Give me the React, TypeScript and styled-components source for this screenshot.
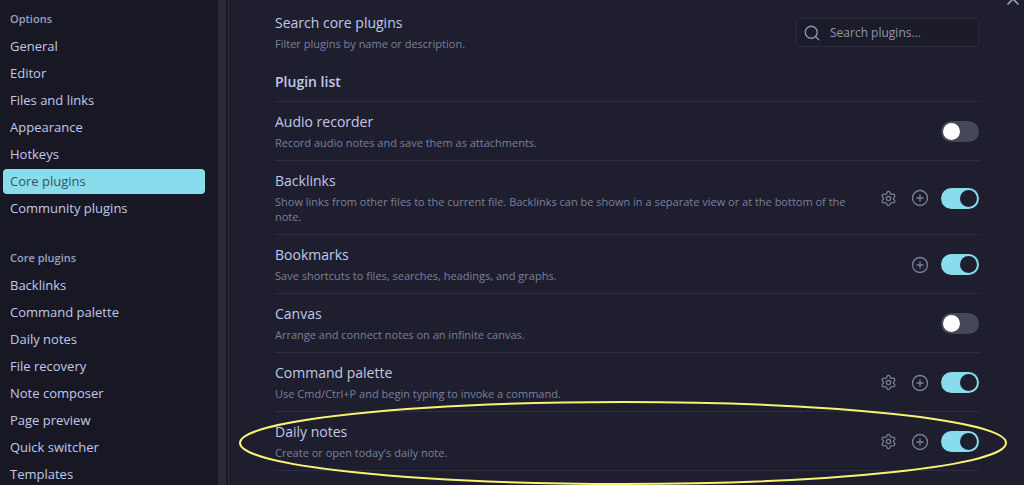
import React, { useState } from "react";
import styled, { createGlobalStyle, css } from "styled-components";
import { CirclePlus, Search, Settings, X } from "lucide-react";

const GlobalStyle = createGlobalStyle`
  * { box-sizing: border-box; }
  body {
    margin: 0;
    background: #1e1e2e;
    color: #c0c9ea;
    font-family: "Segoe UI", "Open Sans", "Noto Sans", sans-serif;
    font-size: 13px;
  }
  button, input { font: inherit; color: inherit; }
`;

const Modal = styled.div`
  position: relative;
  display: flex;
  height: 100vh;
  overflow: hidden;
`;

const Sidebar = styled.nav`
  flex: none;
  width: 218px;
  padding: 10px 13px 0 3px;
  background: #181825;
`;

const ScrollTrack = styled.div`
  flex: none;
  width: 11px;
  background: #181825;
  border-left: 8px solid #2b2a3a;
  border-right: 1px solid #313244;
`;

const NavGroup = styled.section`
  margin-bottom: 28px;
`;

const NavHeading = styled.h2`
  margin: 0 0 6px;
  padding: 0 7px;
  font-size: 11px;
  line-height: 18px;
  font-weight: 600;
  color: #9aa2c0;
`;

const NavList = styled.ul`
  display: flex;
  flex-direction: column;
  gap: 2px;
  margin: 0;
  padding: 0;
  list-style: none;
`;

const NavItem = styled.button<{ $active?: boolean }>`
  display: block;
  width: 100%;
  height: 25px;
  padding: 0 7px;
  border: 0;
  border-radius: 4px;
  background: transparent;
  text-align: left;
  line-height: 25px;
  ${(p) => p.$active && css`
    background: #89dceb;
    color: #3b5266;
  `}
`;

const Content = styled.main`
  flex: 1;
  min-width: 0;
  padding: 14px 45px 0 46px;
`;

const Row = styled.div<{ $divided?: boolean }>`
  position: relative;
  display: flex;
  align-items: center;
  justify-content: space-between;
  gap: 16px;
  ${(p) => p.$divided && css`
    padding: 11px 0 10px;
    border-top: 1px solid #2d2d3e;
  `}
`;

const RowText = styled.div`
  flex: 0 1 584px;
`;

const Name = styled.div`
  font-size: 14px;
  line-height: 18px;
`;

const Description = styled.div`
  margin-top: 4px;
  font-size: 11px;
  line-height: 15px;
  color: #7a809c;
`;

const ListHeading = styled.h3`
  margin: 22px 0 10px;
  font-size: 14px;
  line-height: 18px;
  font-weight: 600;
`;

const SearchBox = styled.label`
  display: flex;
  align-items: center;
  gap: 9px;
  width: 183px;
  height: 29px;
  padding: 0 6px;
  border: 1px solid #2b2b3c;
  border-radius: 4px;
  background: #1b1b29;
  color: #8f96b4;
`;

const SearchInput = styled.input`
  min-width: 0;
  flex: 1;
  padding: 0;
  border: 0;
  outline: 0;
  background: transparent;
  font-size: 12px;
  &::placeholder { color: #8f96b4; opacity: 1; }
`;

const Controls = styled.div`
  display: flex;
  align-items: center;
  gap: 10px;
`;

const IconButton = styled.button`
  display: flex;
  justify-content: center;
  width: 22px;
  padding: 2px 0;
  border: 0;
  background: transparent;
  color: #7a809c;
`;

const Toggle = styled.input`
  appearance: none;
  display: flex;
  width: 38px;
  height: 21px;
  margin: 0;
  padding: 2px;
  border-radius: 11px;
  background: #45475a;
  &::before {
    content: "";
    width: 17px;
    height: 17px;
    border-radius: 50%;
    background: #ffffff;
  }
  &:checked { background: #89dceb; justify-content: flex-end; }
  &:checked::before { background: #1e1e2e; }
`;

const CloseButton = styled.button`
  position: absolute;
  top: -11px;
  right: 1px;
  display: flex;
  padding: 0;
  border: 0;
  background: transparent;
  color: #9aa2c0;
`;

const Highlight = styled.svg`
  position: absolute;
  z-index: 1;
  top: -11px;
  left: -36px;
  width: calc(100% + 64px);
  height: 84px;
  overflow: visible;
  pointer-events: none;
`;

const optionPages = ["General", "Editor", "Files and links", "Appearance", "Hotkeys", "Core plugins", "Community plugins"];
const pluginPages = ["Backlinks", "Command palette", "Daily notes", "File recovery", "Note composer", "Page preview", "Quick switcher", "Templates"];

interface Plugin {
  name: string;
  description: string;
  enabled?: boolean;
  settings?: boolean;
  highlighted?: boolean;
}

const plugins: Plugin[] = [
  { name: "Audio recorder", description: "Record audio notes and save them as attachments." },
  { name: "Backlinks", description: "Show links from other files to the current file. Backlinks can be shown in a separate view or at the bottom of the note.", enabled: true, settings: true },
  { name: "Bookmarks", description: "Save shortcuts to files, searches, headings, and graphs.", enabled: true },
  { name: "Canvas", description: "Arrange and connect notes on an infinite canvas." },
  { name: "Command palette", description: "Use Cmd/Ctrl+P and begin typing to invoke a command.", enabled: true, settings: true },
  { name: "Daily notes", description: "Create or open today's daily note.", enabled: true, settings: true, highlighted: true },
];

function NavSection({ title, pages, active }: { title: string; pages: string[]; active?: string }) {
  return (
    <NavGroup>
      <NavHeading>{title}</NavHeading>
      <NavList>
        {pages.map((page) => (
          <li key={page}><NavItem $active={page === active}>{page}</NavItem></li>
        ))}
      </NavList>
    </NavGroup>
  );
}

function PluginRow({ plugin }: { plugin: Plugin }) {
  const [on, setOn] = useState(!!plugin.enabled);
  return (
    <Row $divided>
      <RowText>
        <Name>{plugin.name}</Name>
        <Description>{plugin.description}</Description>
      </RowText>
      <Controls>
        {plugin.settings && <IconButton aria-label={`${plugin.name} options`}><Settings size={17} strokeWidth={1.75} /></IconButton>}
        {plugin.enabled && <IconButton aria-label={`${plugin.name} hotkeys`}><CirclePlus size={18} strokeWidth={1.75} /></IconButton>}
        <Toggle type="checkbox" aria-label={plugin.name} checked={on} onChange={(e) => setOn(e.target.checked)} />
      </Controls>
      {plugin.highlighted && (
        <Highlight viewBox="0 0 768 84" preserveAspectRatio="none" aria-hidden="true">
          <ellipse cx="384" cy="42" rx="383" ry="41" fill="none" stroke="#f8f473" strokeWidth="2" />
        </Highlight>
      )}
    </Row>
  );
}

export default function App() {
  return (
    <>
      <GlobalStyle />
      <Modal>
        <Sidebar>
          <NavSection title="Options" pages={optionPages} active="Core plugins" />
          <NavSection title="Core plugins" pages={pluginPages} />
        </Sidebar>
        <ScrollTrack />
        <Content>
          <Row>
            <RowText>
              <Name>Search core plugins</Name>
              <Description>Filter plugins by name or description.</Description>
            </RowText>
            <SearchBox>
              <Search size={18} strokeWidth={1.75} />
              <SearchInput type="search" placeholder="Search plugins..." aria-label="Search plugins" />
            </SearchBox>
          </Row>
          <ListHeading>Plugin list</ListHeading>
          {plugins.map((plugin) => <PluginRow key={plugin.name} plugin={plugin} />)}
          <Row $divided />
        </Content>
        <CloseButton aria-label="Close"><X size={20} strokeWidth={2} /></CloseButton>
      </Modal>
    </>
  );
}
